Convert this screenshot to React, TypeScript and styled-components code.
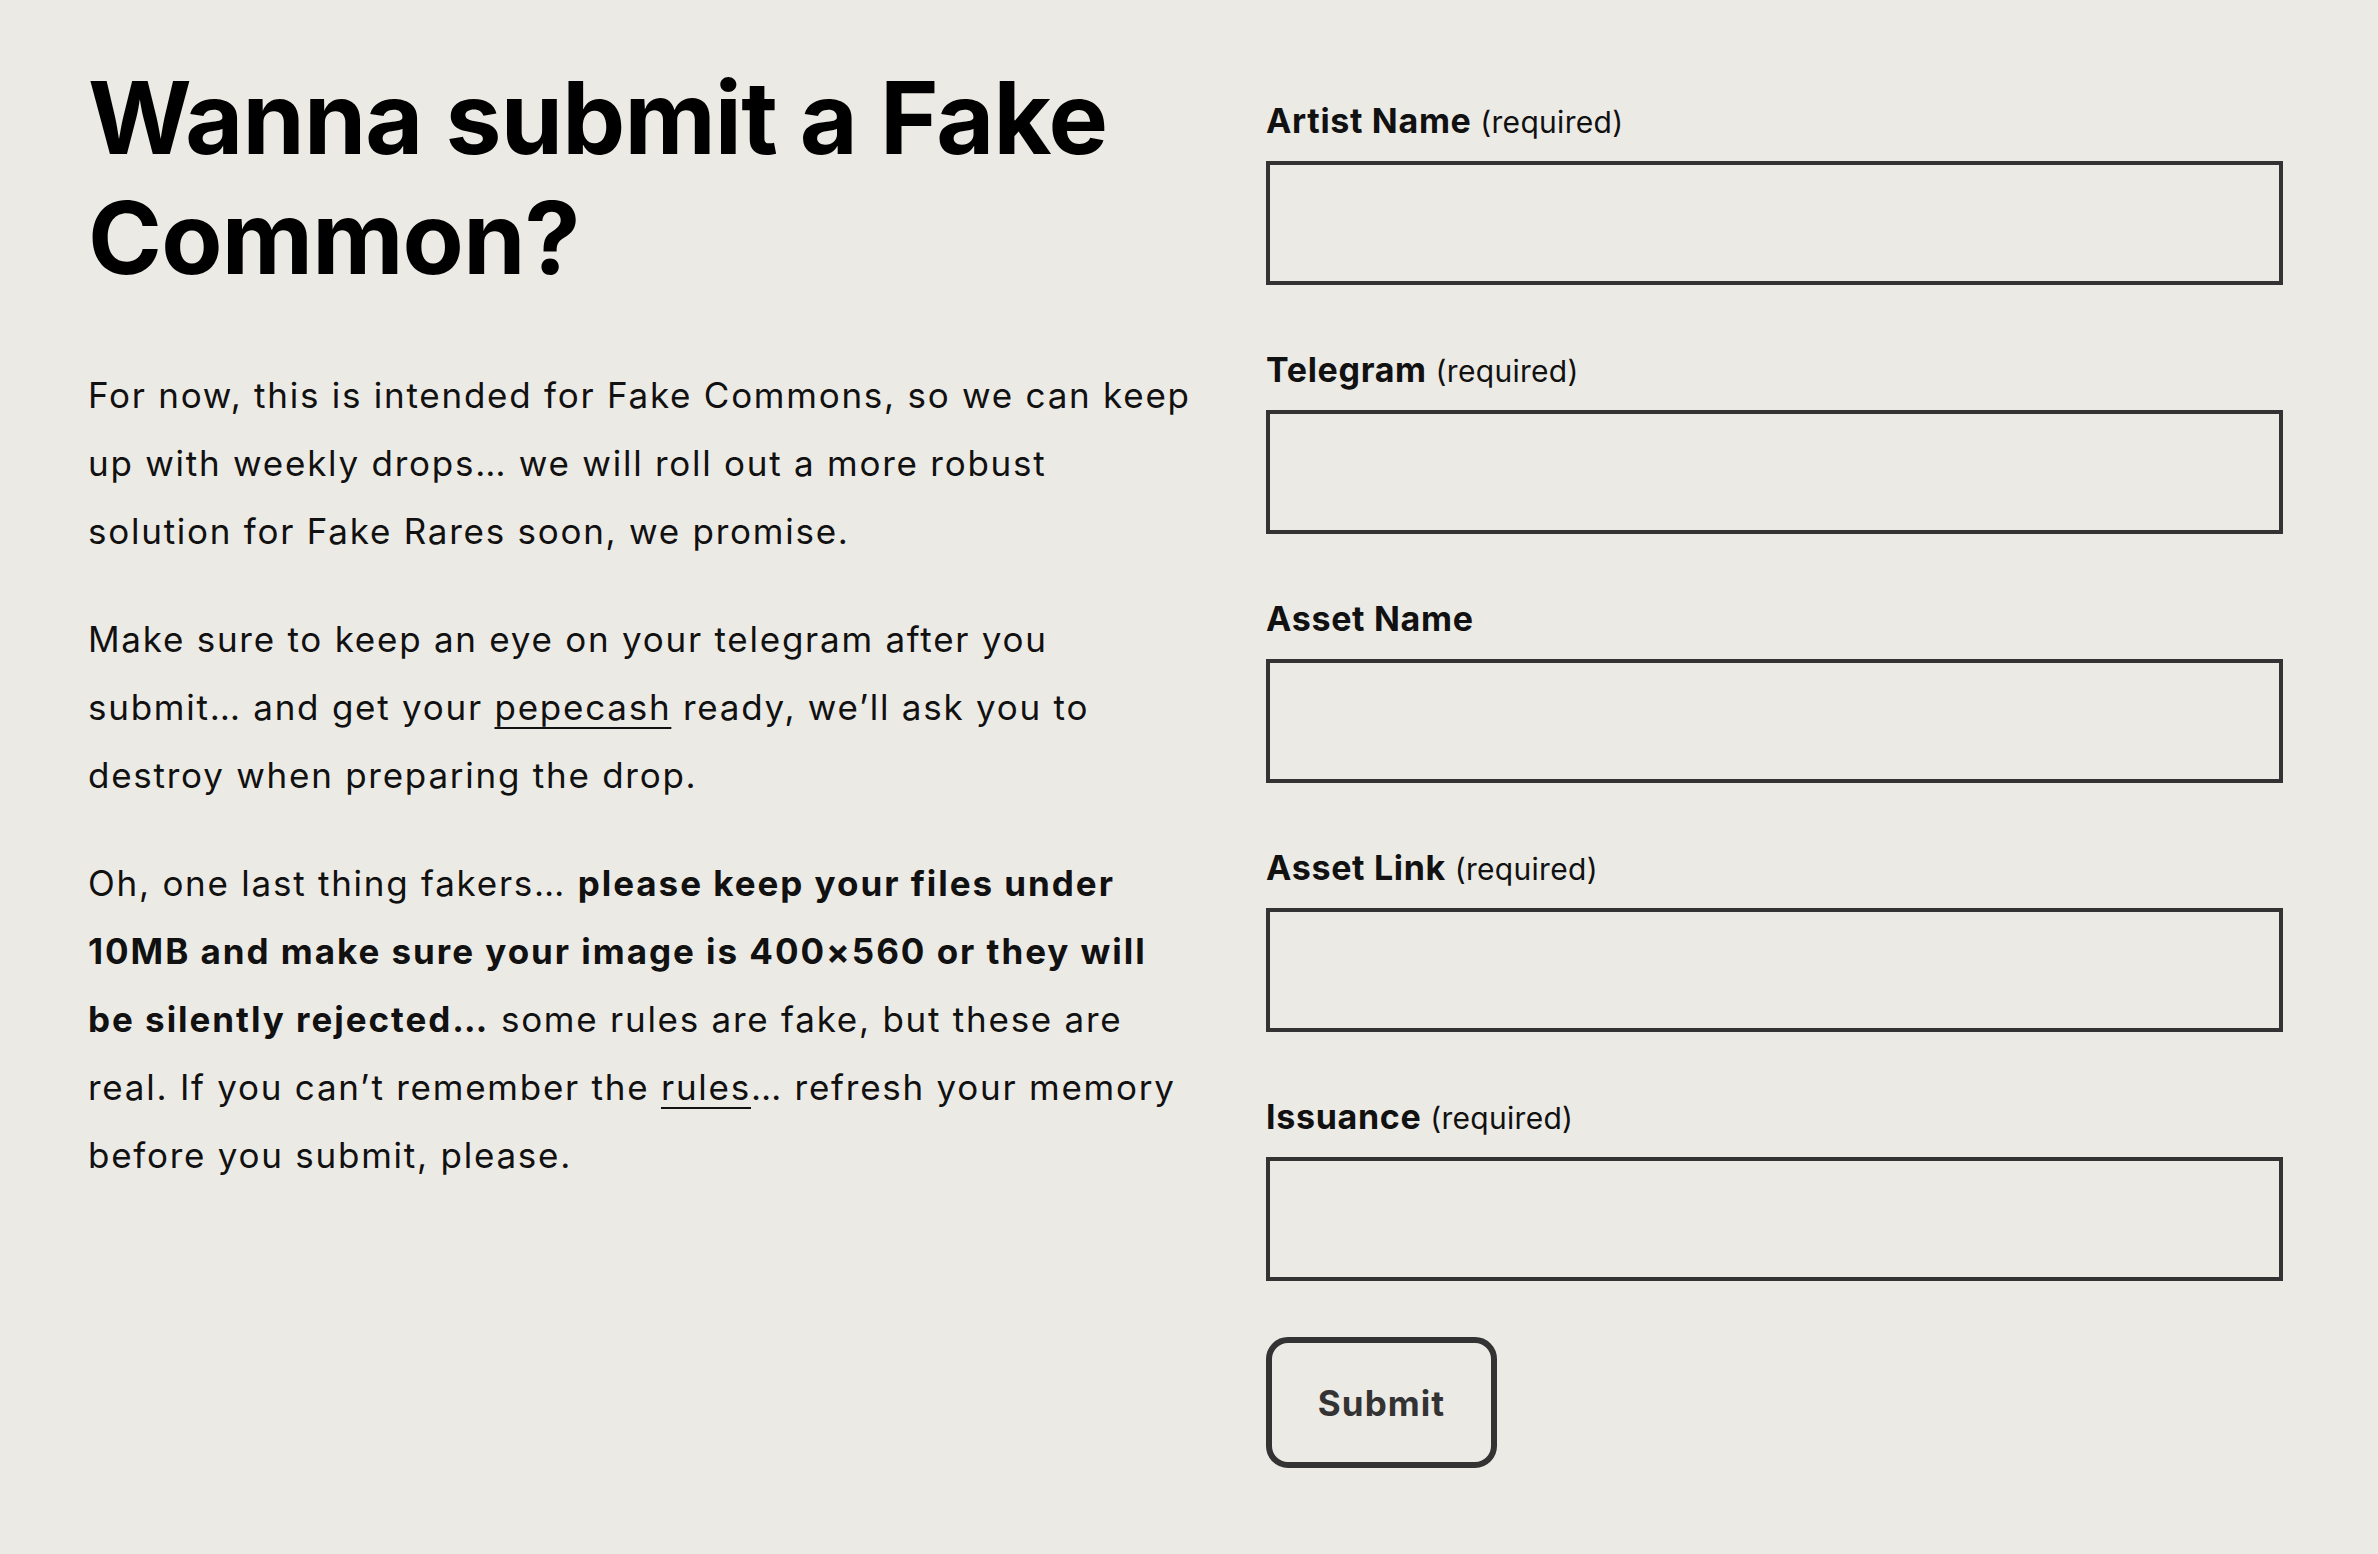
import React from "react";
import styled, { createGlobalStyle } from "styled-components";

const GlobalStyle = createGlobalStyle`
  html, body {
    margin: 0;
    padding: 0;
    background: #eceae5;
    min-height: 100%;
  }
  body {
    font-family: Inter, "Noto Sans", "Liberation Sans", sans-serif;
    color: #111;
  }
  * { box-sizing: border-box; }
`;

const Page = styled.main`
  display: grid;
  grid-template-columns: 1108px 1fr;
  column-gap: 70px;
  padding: 58px 95px 80px 88px;
  min-height: 1554px;
`;

const Intro = styled.section`
  display: flex;
  flex-direction: column;
`;

const Heading = styled.h1`
  margin: 0 0 63px;
  font-size: 100px;
  line-height: 120px;
  font-weight: 700;
  letter-spacing: -0.008em;
  color: #000;
`;

const Paragraph = styled.p`
  margin: 0 0 40px;
  font-size: 35px;
  line-height: 68px;
  font-weight: 400;
  letter-spacing: 0.05em;
  color: #111;
`;

const Strong = styled.strong`
  font-weight: 700;
  letter-spacing: 0.056em;
`;

const TextLink = styled.a`
  color: inherit;
  text-decoration: underline;
  text-underline-offset: 7px;
  text-decoration-thickness: 2px;
`;

const Form = styled.form`
  display: flex;
  flex-direction: column;
  padding-top: 42px;
`;

const Field = styled.div`
  display: flex;
  flex-direction: column;
  gap: 20px;
  margin-bottom: 64px;
`;

const Label = styled.label`
  display: block;
  font-size: 34px;
  line-height: 41px;
  height: 41px;
  font-weight: 700;
  color: #111;
  letter-spacing: 0.02em;
`;

const Hint = styled.span`
  font-size: 30px;
  line-height: 1;
  font-weight: 400;
  letter-spacing: 0.01em;
`;

const Input = styled.input`
  display: block;
  width: 100%;
  height: 124px;
  border: 4px solid #333;
  border-radius: 0;
  background: transparent;
  font-family: inherit;
  font-size: 34px;
  padding: 0 20px;
  outline: none;
`;

const SubmitButton = styled.button`
  align-self: flex-start;
  margin-top: -8px;
  width: 231px;
  height: 131px;
  border: 6px solid #333;
  border-radius: 22px;
  background: transparent;
  font-family: inherit;
  font-size: 35px;
  font-weight: 700;
  letter-spacing: 0.03em;
  color: #333;
  cursor: pointer;
`;

const fields = [
  { id: "artist", label: "Artist Name", required: true },
  { id: "telegram", label: "Telegram", required: true },
  { id: "asset", label: "Asset Name", required: false },
  { id: "link", label: "Asset Link", required: true },
  { id: "issuance", label: "Issuance", required: true },
];

export default function App() {
  return (
    <>
      <GlobalStyle />
      <Page>
        <Intro>
          <Heading>Wanna submit a Fake Common?</Heading>
          <Paragraph>
            For now, this is intended for Fake Commons, so we can keep up with
            weekly drops… we will roll out a more robust solution for Fake Rares
            soon, we promise.
          </Paragraph>
          <Paragraph>
            Make sure to keep an eye on your telegram after you submit… and get
            your <TextLink href="#">pepecash</TextLink> ready, we’ll ask you to
            destroy when preparing the drop.
          </Paragraph>
          <Paragraph>
            Oh, one last thing fakers…{" "}
            <Strong>
              please keep your files under 10MB and make sure your image is
              400×560 or they will be silently rejected…
            </Strong>{" "}
            some rules are fake, but these are real. If you can’t remember the{" "}
            <TextLink href="#">rules</TextLink>… refresh your memory before you
            submit, please.
          </Paragraph>
        </Intro>
        <Form onSubmit={(e) => e.preventDefault()}>
          {fields.map((f) => (
            <Field key={f.id}>
              <Label htmlFor={f.id}>
                {f.label}
                {f.required && <Hint> (required)</Hint>}
              </Label>
              <Input id={f.id} type="text" />
            </Field>
          ))}
          <SubmitButton type="submit">Submit</SubmitButton>
        </Form>
      </Page>
    </>
  );
}
